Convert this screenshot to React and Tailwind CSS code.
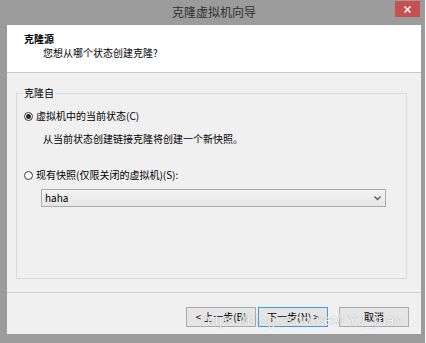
import React, { useState } from "react";

const font = { fontFamily: '"Noto Sans CJK SC", "Noto Sans", sans-serif' };

const Radio = ({ checked, label, onClick }) => (
    <button className="flex items-center h-[14px] text-left" onClick={onClick}>
        <span className="w-[9px] h-[9px] rounded-full border border-[#3c3c3c] bg-white flex items-center justify-center">
            {checked && <span className="w-[5px] h-[5px] rounded-full bg-[#2a2a2a]" />}
        </span>
        <span className="ml-[3px] text-[10px] leading-[14px] text-black">{label}</span>
    </button>
);

const WizardButton = ({ children, focused }) => (
    <button
        className={`w-[70px] h-[20px] text-[10px] leading-[14px] text-black bg-[#e5e5e5] border ${
            focused ? "border-[#3c9be8]" : "border-[#acacac]"
        }`}
    >
        {children}
    </button>
);

const App = () => {
    const [source, setSource] = useState("current");

    return (
        <div className="w-[426px] h-[343px] bg-white" style={font}>
            <div className="relative w-[425px] h-[343px] bg-[#9b9b9b] pl-[7px] pr-[4px] pb-[9px] flex flex-col">
                {/* Title bar */}
                <div className="h-[25px] flex items-center justify-center">
                    <span className="text-[12px] leading-[14px] text-[#2f2f2f] -mt-[1px]">克隆虚拟机向导</span>
                </div>
                <button className="absolute top-[1px] right-[5px] w-[25px] h-[16px] bg-[#c75050] flex items-center justify-center">
                    <svg width="7" height="7" viewBox="0 0 7 7">
                        <path d="M0.5 0.5L6.5 6.5M6.5 0.5L0.5 6.5" stroke="#fff" strokeWidth="1.5" />
                    </svg>
                </button>

                {/* Client area */}
                <div className="flex-1 bg-[#f0f0f0] flex flex-col">
                    <div className="h-[48px] bg-white border-b border-[#c8c8c8] pt-[7px] pl-[17px]">
                        <div className="text-[10px] leading-[14px] font-bold text-black">克隆源</div>
                        <div className="text-[10px] leading-[14px] text-black pl-[19px]">您想从哪个状态创建克隆?</div>
                    </div>

                    <div className="h-[219px] pt-[13px] pl-[9px] pr-[14px]">
                        <fieldset className="border border-[#dadada] h-[193px] pl-[7px]">
                            <legend className="ml-[-1px] px-[1px] text-[10px] leading-[14px] text-black">克隆自</legend>
                            <div className="mt-[9px]">
                                <Radio
                                    checked={source === "current"}
                                    label="虚拟机中的当前状态(C)"
                                    onClick={() => setSource("current")}
                                />
                            </div>
                            <div className="mt-[9px] pl-[19px] text-[10px] leading-[14px] text-black">
                                从当前状态创建链接克隆将创建一个新快照。
                            </div>
                            <div className="mt-[22px]">
                                <Radio
                                    checked={source === "snapshot"}
                                    label="现有快照(仅限关闭的虚拟机)(S):"
                                    onClick={() => setSource("snapshot")}
                                />
                            </div>
                            <div className="mt-[7px] ml-[17px] w-[345px] h-[18px] border border-[#acacac] bg-gradient-to-b from-[#f3f3f3] to-[#e6e6e6] flex items-center justify-between pl-[3px] pr-[4px]">
                                <span className="text-[10px] leading-[14px] text-black">haha</span>
                                <svg width="7" height="5" viewBox="0 0 7 5">
                                    <path d="M0.5 0.5L3.5 3.5L6.5 0.5" stroke="#555" strokeWidth="1.3" fill="none" />
                                </svg>
                            </div>
                        </fieldset>
                    </div>

                    {/* Footer */}
                    <div className="flex-1 border-t border-[#d0d0d0] pt-[14px] pr-[12px] flex justify-end">
                        <div className="flex h-[20px]">
                            <WizardButton>&lt; 上一步(B)</WizardButton>
                            <div className="w-[2px]" />
                            <WizardButton focused>下一步(N) &gt;</WizardButton>
                            <div className="w-[11px]" />
                            <WizardButton>取消</WizardButton>
                        </div>
                    </div>
                </div>

                {/* Watermark */}
                <div
                    className="absolute left-[202px] top-[311px] text-[15px] leading-[18px] text-white/90 [text-shadow:0_0_1px_rgba(0,0,0,0.4)] pointer-events-none"
                    style={{ fontFamily: '"Liberation Sans", Arial, sans-serif' }}
                >
                    https://blog.csdn.net/LYJ_man
                </div>
            </div>
        </div>
    );
};

export default App;
